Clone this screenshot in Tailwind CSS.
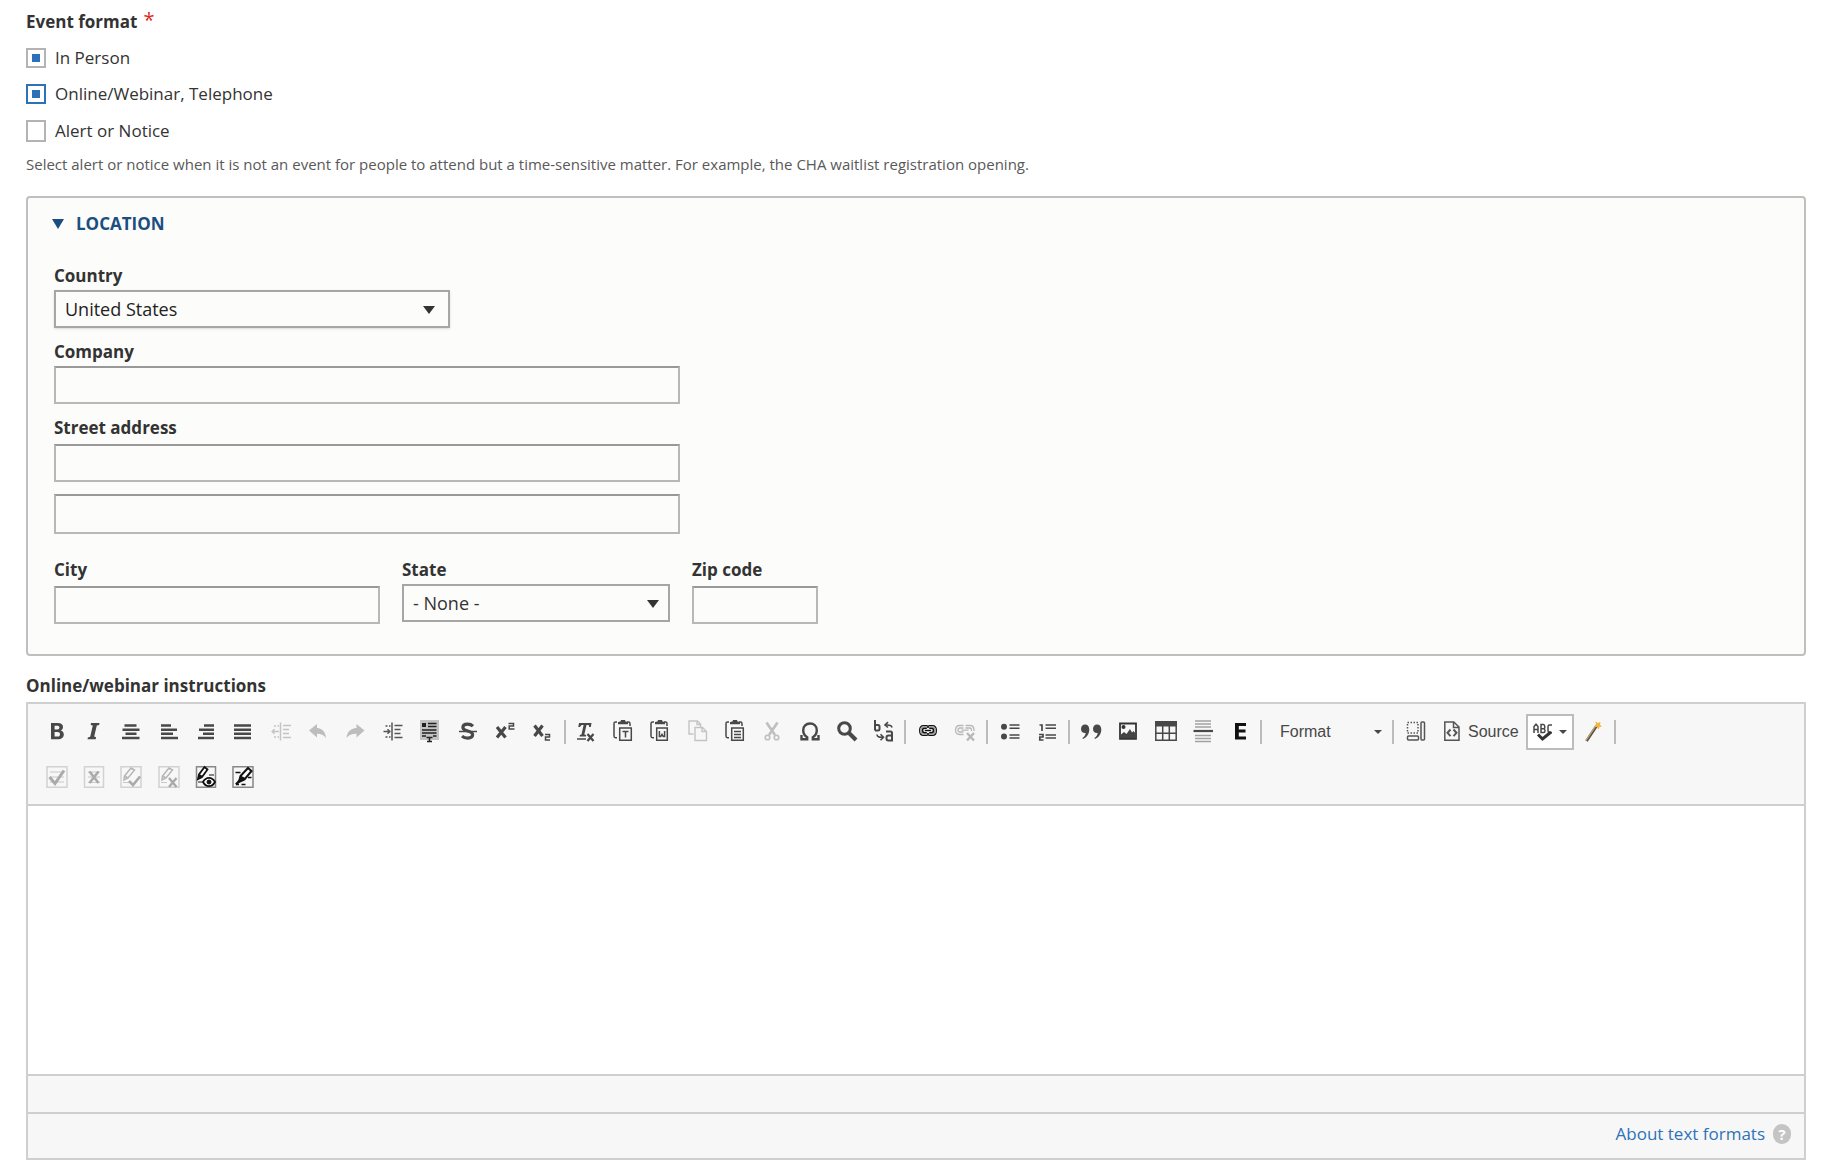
<!DOCTYPE html>
<html lang="en">
<head>
<meta charset="utf-8">
<title>Event format</title>
<script src="https://cdn.jsdelivr.net/npm/@tailwindcss/browser@4"></script>
</head>
<body class="bg-white pr-[38px] pb-3 pl-[26px] font-['Open_Sans','Noto_Sans',sans-serif] text-[17px] leading-6 text-[#333]">
<form>
  <fieldset>
    <legend class="pt-2.5 font-bold">Event format<span class="ml-1.5 inline-block align-top text-[20px] leading-5 font-normal text-[#e0291d]" aria-hidden="true">*</span></legend>
    <div class="mt-3 flex flex-col gap-3">
      <label class="flex items-center gap-[9px]"><input type="checkbox" checked class="size-5 appearance-none border-2 border-[#b3b3b3] bg-white bg-clip-content p-1 checked:bg-[#2d72b8]">In Person</label>
      <label class="flex items-center gap-[9px]"><input type="checkbox" checked class="size-5 appearance-none border-2 border-[#2d72b8] bg-white bg-clip-content p-1 checked:bg-[#2d72b8]">Online/Webinar, Telephone</label>
      <label class="flex h-[26px] items-center gap-[9px]"><input type="checkbox" class="h-[22px] w-5 appearance-none border-2 border-[#b3b3b3] bg-white">Alert or Notice</label>
    </div>
    <p class="mt-2 text-[15px] text-[#595959]">Select alert or notice when it is not an event for people to attend but a time-sensitive matter. For example, the CHA waitlist registration opening.</p>
  </fieldset>

  <details open class="mt-5 rounded border-2 border-[#bfbfbf] bg-[#fcfcfa] px-[26px] pt-3.5 pb-[30px]">
    <summary class="-ml-0.5 flex list-none items-center gap-3 font-bold text-[#1b4e80] uppercase"><svg class="h-2.5 w-3" viewBox="0 0 12 10" fill="currentColor"><path d="M0 0h12L6 10z"/></svg>Location</summary>
    <div class="mt-7">
      <label for="country" class="block font-bold">Country</label>
      <div class="relative mt-0.5 w-[396px]">
        <select id="country" class="block h-[38px] w-full appearance-none border-2 border-[#a6a6a6] bg-[#fcfcfa] px-[9px] text-[18px] text-[#222] shadow-sm"><option>United States</option></select>
        <svg class="pointer-events-none absolute top-4 right-[15px] h-2 w-3" viewBox="0 0 12 8" fill="#333"><path d="M0 0h12L6 8z"/></svg>
      </div>
    </div>
    <div class="mt-3">
      <label for="company" class="block font-bold">Company</label>
      <input id="company" type="text" class="mt-0.5 block h-[38px] w-[626px] border-2 border-[#b8b8b8] border-t-[#999] bg-[#fcfcfa] px-2">
    </div>
    <div class="mt-3">
      <label for="street" class="block font-bold">Street address</label>
      <input id="street" type="text" class="mt-1 block h-[38px] w-[626px] border-2 border-[#b8b8b8] border-t-[#999] bg-[#fcfcfa] px-2">
      <input type="text" aria-label="Street address line 2" class="mt-3 block h-10 w-[626px] border-2 border-[#b8b8b8] border-t-[#999] bg-[#fcfcfa] px-2">
    </div>
    <div class="mt-6 flex gap-[22px]">
      <div>
        <label for="city" class="block font-bold">City</label>
        <input id="city" type="text" class="mt-1 block h-[38px] w-[326px] border-2 border-[#b8b8b8] border-t-[#999] bg-[#fcfcfa] px-2">
      </div>
      <div>
        <label for="state" class="block font-bold">State</label>
        <div class="relative mt-0.5 w-[268px]">
          <select id="state" class="block h-[38px] w-full appearance-none border-2 border-[#a6a6a6] bg-[#fcfcfa] px-[9px] text-[18px] text-[#333]"><option>- None -</option></select>
          <svg class="pointer-events-none absolute top-4 right-[11px] h-2 w-3" viewBox="0 0 12 8" fill="#333"><path d="M0 0h12L6 8z"/></svg>
        </div>
      </div>
      <div>
        <label for="zip" class="block font-bold">Zip code</label>
        <input id="zip" type="text" class="mt-1 block h-[38px] w-[126px] border-2 border-[#b8b8b8] border-t-[#999] bg-[#fcfcfa] px-2">
      </div>
    </div>
  </details>

  <label for="instructions" class="mt-[18px] block font-bold">Online/webinar instructions</label>
  <div class="mt-1 border-2 border-[#cfcfcf] bg-[#f7f7f7]">
    <div class="border-b-2 border-[#cfcfcf] pt-2.5 pb-[15px] pl-2.5 font-['Liberation_Sans',sans-serif] text-[16px] text-[#484848]" role="toolbar" aria-label="Editor toolbar">
      <div class="flex flex-wrap items-center">
        <div class="flex w-[523px] *:flex *:flex-1 *:justify-center">
          <button type="button" aria-label="Bold"><svg class="size-6" viewBox="0 0 24 24"><path fill="#484848" fill-rule="evenodd" d="M6 3h6.500c3.600 0 5.500 1.500 5.500 4 0 1.900-1 3.200-2.600 3.600 2.200.4 3.400 1.800 3.400 3.900 0 3-2.200 4.800-6 4.800H6zM9.600 5.700v3.800h2.600c1.500 0 2.200-.7 2.200-2s-.8-1.800-2.300-1.800zM9.600 12v4.500h2.900c1.700 0 2.500-.8 2.500-2.300S14.100 12 12.400 12z"/></svg></button>
          <button type="button" aria-label="Italic"><svg class="size-6" viewBox="0 0 24 24"><path fill="#484848" d="M9 3h8.500l-.4 1.900-2.300.5-2.600 11.200 1.900.6-.4 2.100H5.500l.4-1.900 2.300-.6 2.600-11.300-2.100-.6z"/></svg></button>
          <button type="button" aria-label="Center"><svg class="size-6" viewBox="0 0 24 24" stroke="#484848" stroke-width="2.600"><path d="M5.500 5.500h12M3.500 9.800h17M6.500 13.800h11M3 18h17.500"/></svg></button>
          <button type="button" aria-label="Align left"><svg class="size-6" viewBox="0 0 24 24" stroke="#484848" stroke-width="2.600"><path d="M4 5.500h10M4 9.800h16M4 13.800h12M4 18h17"/></svg></button>
          <button type="button" aria-label="Align right"><svg class="size-6" viewBox="0 0 24 24" stroke="#484848" stroke-width="2.600"><path d="M10 5.500h10M5 9.800h15M9 13.800h11M4 18h16"/></svg></button>
          <button type="button" aria-label="Justify"><svg class="size-6" viewBox="0 0 24 24" stroke="#484848" stroke-width="2.600"><path d="M3 5.500h17M3 9.800h17M3 13.800h17M3 18h17"/></svg></button>
          <button type="button" aria-label="Decrease indent" disabled><svg class="size-6" viewBox="0 0 24 24" stroke="#c4c4c4" fill="none" stroke-width="1.500"><path d="M11.500 2.500v18M14 5.500h8M14 9.500h6M14 13.500h6M14 17.500h8"/><path d="M3 11.500h7M5.500 9.200l-2.300 2.300 2.300 2.300"/><path stroke-dasharray="2 1.500" d="M5 6h5M5 17h5"/></svg></button>
          <button type="button" aria-label="Undo" disabled><svg class="size-6" viewBox="0 0 24 24"><path fill="#bdbdbd" d="M3 10.500 11 4v4c5.500.5 8.500 4 9 10-2.300-3.300-5-4.300-9-4.300V17.500z"/></svg></button>
          <button type="button" aria-label="Redo" disabled><svg class="size-6" viewBox="0 0 24 24"><path fill="#bdbdbd" d="M20.500 10.500 12.500 4v4c-6 .5-9.500 4-10 10 2.500-3.300 5.500-4.300 10-4.300V17.500z"/></svg></button>
          <button type="button" aria-label="Increase indent"><svg class="size-6" viewBox="0 0 24 24" stroke="#555" fill="none" stroke-width="1.500"><path d="M11 2.500v18M13.500 5.500h8M13.500 9.500h6M13.500 13.500h6M13.500 17.500h8"/><path d="M2.500 11.500h7M6.500 9.200l2.300 2.300-2.300 2.300"/><path stroke-dasharray="2 1.500" d="M4.500 6h5M4.500 17h5"/></svg></button>
          <button type="button" aria-label="Templates"><svg class="size-6" viewBox="0 0 24 24"><path fill="#c3c3c3" d="M2 0h19v20H2z"/><path fill="#222" d="M4 3h4v4H4z"/><path stroke="#222" stroke-width="1.600" d="M10 3.500h8.500M10 6.500h8.500M4 10h14.500M4 13h14.500M4 16h4M15 16h3.500"/><path stroke="#222" stroke-width="1.500" fill="none" d="M8.500 17.500h6M11.500 17.500v4.500M9 21.500h5"/></svg></button>
          <button type="button" aria-label="Strikethrough"><svg class="size-6" viewBox="0 0 24 24" fill="none" stroke="#484848"><path stroke-width="3.200" d="M17 6.200C15.500 4.800 13.500 4.200 11.500 4.200c-2.800 0-4.600 1.300-4.600 3.200 0 4.600 9.700 2.600 9.700 7.200 0 2.200-2 3.500-4.900 3.500-2.300 0-4.300-.7-5.700-2"/><path stroke-width="1.500" d="M3 11.500h18"/></svg></button>
          <button type="button" aria-label="Superscript"><svg class="size-6" viewBox="0 0 24 24" fill="none" stroke="#484848"><path stroke-width="3.200" d="M4 7 12.500 17.500M12.500 7 4 17.500"/><path stroke-width="1.500" d="M15.500 3.500h5V6h-4.300v3h5.300"/></svg></button>
          <button type="button" aria-label="Subscript"><svg class="size-6" viewBox="0 0 24 24" fill="none" stroke="#484848"><path stroke-width="3.200" d="M4.500 5.500 12.500 16M12.500 5.500 4.500 16"/><path stroke-width="1.500" d="M15 14.500h4.500V17h-4v3H20"/></svg></button>
        </div>
        <div class="ml-[3px] h-6 w-0.5 bg-[#bcbcbc]"></div>
        <div class="ml-px flex w-[336px] *:flex *:flex-1 *:justify-center">
          <button type="button" aria-label="Remove format"><svg class="size-6" viewBox="0 0 24 24"><path fill="#484848" d="M5 3h12.500l-.7 4h-1.700l-.3-1.900h-2.300L10.300 14.500l1.900.5-.3 1.500H5.500l.3-1.500 1.700-.5L9.600 5.100H7.500L6 7H4.300z"/><path stroke="#484848" stroke-width="1.500" d="M3 19h9"/><path stroke="#484848" stroke-width="2.200" d="m13.500 14 6 7M19.500 14l-6 7"/></svg></button>
          <button type="button" aria-label="Paste as plain text"><svg class="size-6" viewBox="0 0 24 24" fill="none" stroke="#484848" stroke-width="1.500"><path d="M6 2H4.500C3.500 2 3 2.500 3 3.500V16c0 1 .5 1.700 1.500 1.700H6M16 2h1.500C18.500 2 19 2.500 19 3.500V6"/><path fill="#484848" stroke="none" d="M7 4.200V2l2.500-.5L10 0h4l.5 1.500L17 2v2.200z"/><path d="M8.700 8h11.600v12.300H8.700zM11.500 11.500h6M14.500 11.500v6"/></svg></button>
          <button type="button" aria-label="Paste from Word"><svg class="size-6" viewBox="0 0 24 24" fill="none" stroke="#484848" stroke-width="1.500"><path d="M6 2H4.500C3.500 2 3 2.500 3 3.500V16c0 1 .5 1.700 1.500 1.700H6M16 2h1.500C18.500 2 19 2.500 19 3.500V6"/><path fill="#484848" stroke="none" d="M7 4.200V2l2.500-.5L10 0h4l.5 1.500L17 2v2.200z"/><path d="M8.700 8h10.600v12.300H8.700zM11.400 11v5.500h1.300l1.300-2 1.300 2h1.300V11"/></svg></button>
          <button type="button" aria-label="Copy" disabled><svg class="size-6" viewBox="0 0 24 24" fill="none" stroke="#c4c4c4" stroke-width="1.400"><path d="M7.500 14H3V1h8.500l3 3v3"/><path d="M11 1v3.500h3.500"/><path d="M9 7.500h7.500l4 4v9H9zM16 7.500v4h4"/></svg></button>
          <button type="button" aria-label="Paste"><svg class="size-6" viewBox="0 0 24 24" fill="none" stroke="#484848" stroke-width="1.500"><path d="M6 2H4.500C3.500 2 3 2.500 3 3.500V16c0 1 .5 1.700 1.500 1.700H6M16 2h1.500C18.500 2 19 2.500 19 3.500V6"/><path fill="#484848" stroke="none" d="M7 4.200V2l2.500-.5L10 0h4l.5 1.500L17 2v2.200z"/><path d="M8.700 8h11.600v12.300H8.700zM11 11.500h7M11 14.500h7M11 17.500h7"/></svg></button>
          <button type="button" aria-label="Cut" disabled><svg class="size-6" viewBox="0 0 24 24" fill="none" stroke="#bfbfbf"><path stroke-width="2.600" d="M6.500 2.500 15 15M17.500 2.500 9 15"/><circle cx="7.500" cy="17.500" r="2.300" stroke-width="1.600"/><circle cx="16.500" cy="17.500" r="2.300" stroke-width="1.600"/></svg></button>
          <button type="button" aria-label="Special character"><svg class="size-6" viewBox="0 0 24 24" fill="none" stroke="#484848"><path stroke-width="2.400" d="M3.500 15v4.300h5.700v-2C6.500 15.500 5.200 13 5.200 10.200c0-4 2.800-6.700 6.800-6.700s6.800 2.700 6.800 6.700c0 2.800-1.300 5.300-4 7.100v2h5.700V15"/></svg></button>
          <button type="button" aria-label="Find"><svg class="size-6" viewBox="0 0 24 24" fill="none" stroke="#484848"><circle cx="9.500" cy="8.500" r="5.800" stroke-width="3"/><path stroke-width="4" d="m14 13 7 7"/></svg></button>
          <button type="button" aria-label="Replace"><svg class="size-6" viewBox="0 0 24 24" fill="none" stroke="#484848" stroke-width="2"><path d="M3 0v10.500M3 5h3c1.200 0 1.500.6 1.500 1.500v2.800c0 .8-.4 1.200-1.500 1.200H3"/><path stroke-width="1.600" d="M20 7.500c-.4-2-2.500-2.700-5.500-2.500M16 2.200 13 5l3 2.500M5 14.500c0 2.200 2 3 5.500 2.700M8.500 14.300l3 3-3 3"/><path d="M14 11.500h4.500c1 0 1.500.5 1.500 1.500v8M20 15.500h-3.500c-1.500 0-2 .7-2 2v1.300c0 1 .5 1.700 1.800 1.700H21"/></svg></button>
        </div>
        <div class="ml-px h-6 w-0.5 bg-[#bcbcbc]"></div>
        <div class="ml-[3px] flex w-[74px] *:flex *:flex-1 *:justify-center">
          <button type="button" aria-label="Link"><svg class="size-6" viewBox="0 0 24 24" fill="none"><path stroke="#111" stroke-width="1.200" d="M11.500 5.600H7.500Q3.600 5.600 3.600 10.500T7.500 15.400H11.500M12.500 5.600h4q3.900 0 3.900 4.900t-3.900 4.900h-4"/><path stroke="#999" stroke-width="1.400" d="M12 6.900H8Q4.900 6.900 4.900 10.500T8 14.100h4M12 6.900h4q3.100 0 3.100 3.600T16 14.100h-4"/><path stroke="#111" stroke-width="1.600" d="M10.800 8.300H8.500Q6.500 8.300 6.500 10.500t2 2.200h2.300M13.200 8.300h2.300q2 0 2 2.200t-2 2.200h-2.300M8.800 10.500h6.400M12 5.500v2.500M12 13v2.500"/></svg></button>
          <button type="button" aria-label="Unlink" disabled><svg class="size-6" viewBox="0 0 24 24" fill="none"><g stroke="#b8b8b8" stroke-width="1.300"><path d="M10.500 5.500h-4Q2.500 5.500 2.500 10t4 4.500h4M10.500 8H7Q5 8 5 10t2 2h3.500M12.500 5.500H17q4 0 4 4.500v1M12.500 8h4q2 0 2 2v1M8.500 10.200h7"/></g><path stroke="#b8b8b8" stroke-width="2.400" d="m14 13 7 7.500M21 13l-7 7.500"/></svg></button>
        </div>
        <div class="ml-[3px] h-6 w-0.5 bg-[#bcbcbc]"></div>
        <div class="ml-[3px] flex w-[74px] *:flex *:flex-1 *:justify-center">
          <button type="button" aria-label="Bulleted list"><svg class="size-6" viewBox="0 0 24 24" stroke="#484848" stroke-width="1.500"><path d="M11.500 5h10M11.500 8.200h10M11.500 15h10M11.500 18h10"/><circle cx="6" cy="6.700" r="3" stroke="none" fill="#484848"/><circle cx="6" cy="16.500" r="3" stroke="none" fill="#484848"/></svg></button>
          <button type="button" aria-label="Numbered list"><svg class="size-6" viewBox="0 0 24 24" fill="none" stroke="#484848" stroke-width="1.500"><path d="M10.500 5h10.500M10.500 8.200h10.500M10.500 15h10.500M10.500 18h10.500"/><path stroke-width="1.700" d="M4.500 5H7v6M4 14.500h4V17H4.800v3H8.500"/></svg></button>
        </div>
        <div class="ml-[3px] h-6 w-0.5 bg-[#bcbcbc]"></div>
        <div class="ml-0.5 flex w-[187px] *:flex *:flex-1 *:justify-center">
          <button type="button" aria-label="Block quote"><svg class="size-6" viewBox="0 0 24 24" fill="#484848"><path d="M6 4.500c2.600 0 4.300 1.900 4.300 5 0 4.300-2.500 7.800-6.300 9.500l-.6-1c2-1.400 3.200-3.200 3.300-5-2.700.4-4.700-1.400-4.700-4.100 0-2.500 1.700-4.400 4-4.400z"/><path d="M18 4.500c2.600 0 4.300 1.900 4.300 5 0 4.300-2.500 7.800-6.300 9.500l-.6-1c2-1.400 3.200-3.200 3.300-5-2.700.4-4.700-1.400-4.700-4.100 0-2.500 1.700-4.400 4-4.400z"/></svg></button>
          <button type="button" aria-label="Image"><svg class="size-6" viewBox="0 0 24 24"><path fill="#f7f7f7" stroke="#333" stroke-width="1.800" d="M4 3.500h16v15.300H4z"/><circle cx="7.500" cy="7" r="2" fill="#333"/><path fill="#444" d="m5 18 0-3.500 3-2.500 2.500 2 3.500-5 2 3.500 1.500-1.500 2.500 3V18z"/></svg></button>
          <button type="button" aria-label="Table"><svg class="size-6" viewBox="0 0 24 24" fill="none" stroke="#484848"><path fill="#484848" stroke="none" d="M1 1h22v5.500H1z"/><path stroke-width="1.500" d="M1.800 6v14.200h20.400V6M1 13.200h22M8.700 6v14M15.300 6v14"/></svg></button>
          <button type="button" aria-label="Horizontal line"><svg class="size-6" viewBox="0 0 24 24" stroke="#a2a2a2" stroke-width="1.300"><path d="M4 1h16M4 4h16M4 7h16M4 15.500h16M4 18.500h16M4 21.500h16"/><path stroke="#484848" stroke-width="2.200" d="M2.500 11h19.500"/></svg></button>
          <button type="button" aria-label="Embed"><svg class="size-6" viewBox="0 0 24 24"><path fill="#111" d="M7 3h11v3h-7.200v3.600h6.700v3h-6.700v3.900H18v3H7z"/></svg></button>
        </div>
        <div class="ml-px h-6 w-0.5 bg-[#bcbcbc]"></div>
        <div class="relative ml-[18px] w-28">
          <select aria-label="Paragraph format" class="block h-6 w-full appearance-none"><option>Format</option></select>
          <svg class="pointer-events-none absolute top-2.5 right-2.5 h-1 w-2" viewBox="0 0 8 4" fill="#484848"><path d="M0 0h8L4 4z"/></svg>
        </div>
        <div class="h-6 w-0.5 bg-[#bcbcbc]"></div>
        <button type="button" aria-label="Show blocks" class="ml-2.5"><svg class="size-6" viewBox="0 0 24 24" fill="none" stroke="#555" stroke-width="1.500"><path stroke-dasharray="1.500 1.500" d="M3.500 2.500h10.500v10.500H3.500z"/><rect x="3.500" y="16" width="11" height="4" rx="1"/><rect x="17" y="2" width="3.500" height="18" rx="1"/></svg></button>
        <button type="button" class="ml-3 flex items-center gap-1"><svg class="size-6" viewBox="0 0 24 24" fill="none" stroke="#555" stroke-width="1.500"><path d="M4.800 2h9l5.200 5v13.300H4.800zM13.500 2v5.500H19"/><path stroke-width="2" d="m10.500 9.500-3 3.300 3 3.300M13.500 9.500l3 3.300-3 3.300"/></svg>Source</button>
        <button type="button" aria-label="Spell check as you type" class="ml-[7px] flex h-9 w-12 items-center justify-center gap-1.5 border-2 border-[#bcbcbc] bg-white"><svg class="h-6 w-5" viewBox="0 0 20 24" fill="none" stroke="#484848" stroke-width="1.500"><path d="M1 13V6.500L3 4.200l2 2.300V13M1 9.500h4M8 4.500v8h2.500q1.500 0 1.500-1.800T10.500 8.700H8h2.500q1.300 0 1.300-2T10.500 4.500zM19 5h-2.500q-1.500 0-1.500 1.700v4q0 1.800 1.500 1.800H19"/><path stroke="#333" stroke-width="3" d="m5 14.500 4.500 4.500L18 12"/></svg><svg class="h-1 w-2" viewBox="0 0 8 4" fill="#484848"><path d="M0 0h8L4 4z"/></svg></button>
        <button type="button" aria-label="Auto format" class="ml-2"><svg class="size-6" viewBox="0 0 24 24"><path stroke="#5e4c38" stroke-width="2.800" d="M4.500 21 14.500 6"/><path stroke="#c0a98a" stroke-width="1.300" d="M4 20.500 14 5.500"/><path fill="#f3b63c" d="m13.500 1 2 2 3-1-.5 2.700L20 6.500l-2.600.5-.6 2.500-1.800-2.500-2.600-.5 1.600-2.200z"/></svg></button>
        <div class="ml-2 h-6 w-0.5 bg-[#bcbcbc]"></div>
      </div>
      <div class="mt-[15px] flex w-[224px] *:flex *:flex-1 *:justify-center">
        <button type="button" aria-label="Accept all changes" disabled><svg class="size-6" viewBox="0 0 24 24" fill="none"><path stroke="#d2d2d2" stroke-width="1.500" d="M2 1.800h20v20.400H2z"/><path stroke="#c8c8c8" d="M5 7h14M5 12h14M5 17h14"/><path stroke="#aaa" stroke-width="3" d="m4.500 12 5.500 6.500L19 5.500"/></svg></button>
        <button type="button" aria-label="Reject all changes" disabled><svg class="size-6" viewBox="0 0 24 24" fill="none"><path stroke="#d2d2d2" stroke-width="1.500" d="M2.500 1.800h19v20.400h-19z"/><path stroke="#c8c8c8" d="M6 7h12M6 12h12M6 17.500h12"/><path stroke="#aaa" stroke-width="2.600" d="m7.500 6.500 9 11.500M16.500 6.500l-9 11.500"/></svg></button>
        <button type="button" aria-label="Accept change" disabled><svg class="size-6" viewBox="0 0 24 24" fill="none"><path stroke="#d2d2d2" stroke-width="1.500" d="M2 1.800h20v20.400H2z"/><path stroke="#b5b5b5" stroke-width="1.500" d="m12 3-6.500 8L5 15l4-2 6.500-8zM12 3l3.500 2.500M5.500 11 9 13"/><path stroke="#c8c8c8" d="M4 17.500h6"/><path stroke="#aaa" stroke-width="2.600" d="m10 16 4 4 7-8.500"/></svg></button>
        <button type="button" aria-label="Reject change" disabled><svg class="size-6" viewBox="0 0 24 24" fill="none"><path stroke="#d2d2d2" stroke-width="1.500" d="M2 1.800h20v20.400H2z"/><path stroke="#b5b5b5" stroke-width="1.500" d="m12 3-6.500 8L5 15l4-2 6.500-8zM12 3l3.500 2.500M5.500 11 9 13"/><path stroke="#c8c8c8" d="M4 17.500h6"/><path stroke="#aaa" stroke-width="2.400" d="m12 13 7.500 9M19.500 13 12 22"/></svg></button>
        <button type="button" aria-label="Show changes"><svg class="size-6" viewBox="0 0 24 24" fill="none" stroke="#111"><path stroke="#888" stroke-width="1.500" d="M2.500 1.800h19v20.400h-19z"/><path stroke-width="1.800" fill="#fff" d="M10.500 2 5 9.500 4 14l4-2 5.500-7.500z"/><path stroke-width="3" d="M5 10.500 7.500 12"/><path d="M4 17h5M15 10h5"/><path fill="#fff" stroke-width="1.800" d="M9 17c3-5.500 9-5.500 12 0-3 5.500-9 5.500-12 0z"/><circle cx="15" cy="17" r="2" fill="#111"/></svg></button>
        <button type="button" aria-label="Toggle change tracking"><svg class="size-6" viewBox="0 0 24 24" fill="none" stroke="#111"><path stroke="#888" stroke-width="1.500" d="M2 1.800h20v20.400H2z"/><path stroke-width="1.500" d="M4.500 7.500h5M17 12.500h3.500M5 19.500h3M10.500 19.500h4"/><path stroke-width="2" fill="#fff" d="M17 3 9.500 11 8 17l5.500-2.500L20.500 6z"/><path stroke-width="4" d="m9 12.500 4 2"/><path stroke-width="2.500" d="m9 15-4 4.500"/></svg></button>
      </div>
    </div>
    <textarea id="instructions" class="block h-[268px] w-full resize-none bg-white p-5 outline-none"></textarea>
    <div class="h-10 border-y-2 border-[#cfcfcf]"></div>
    <div class="flex h-11 items-center justify-end gap-2 pr-[13px] pb-1">
      <a href="#" class="text-[#2d72b8]">About text formats</a>
      <span class="flex h-5 w-[18px] items-center justify-center rounded-full bg-[#c4c4c4] text-[15px] font-bold text-white">?</span>
    </div>
  </div>
</form>
</body>
</html>
